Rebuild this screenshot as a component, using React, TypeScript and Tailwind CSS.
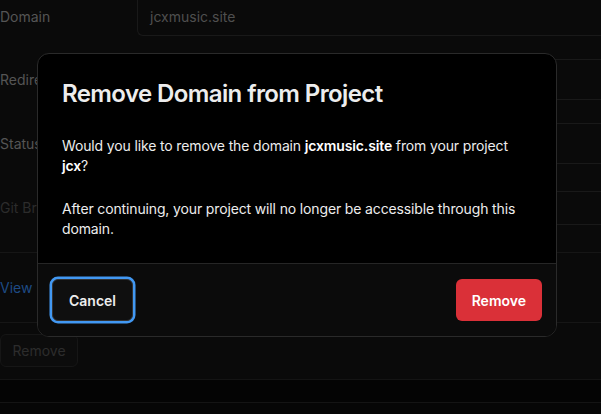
import React from 'react';

const Row: React.FC<{ label: string; dim?: boolean; children: React.ReactNode }> = ({ label, dim, children }) => (
  <div className="flex items-center">
    <div className={`w-[137px] shrink-0 text-[14px] leading-[20px] ${dim ? 'text-[#2c2c2c]' : 'text-[#555]'}`}>{label}</div>
    <div className="flex-1">{children}</div>
  </div>
);

const Field: React.FC<{ short?: boolean }> = ({ short }) => (
  <div className={`${short ? 'h-[34px]' : 'h-[41px]'} border border-[#191919] rounded-l-[6px] border-r-0`} />
);

export default function App() {
  return (
    <div className="relative w-[601px] h-[414px] overflow-hidden bg-[#0a0a0a]" style={{ fontFamily: 'Inter, "Noto Sans", sans-serif' }}>
      {/* dimmed page behind */}
      <div className="-mt-[5px]">
        <div className="flex h-[41px]">
          <div className="w-[137px] shrink-0 text-[14px] text-[#555] pt-[11px]">Domain</div>
          <div className="flex-1 border border-[#191919] border-t-0 border-r-0 rounded-bl-[6px] px-3 pt-[11px] text-[14px] text-[#4f4f4f]">jcxmusic.site</div>
        </div>
        <div className="mt-[23px] flex flex-col gap-[23px]">
          <Row label="Redirect to"><Field /></Row>
          <Row label="Status"><Field /></Row>
        </div>
        <div className="mt-[27px]">
          <Row label="Git Branch" dim><Field short /></Row>
        </div>
        <div className="mt-[27px] border-t border-[#161616] h-[70px] flex items-center text-[14px] text-[#1e4a85]">
          View
        </div>
        <div className="border-t border-[#161616] pt-[11px] pb-[12px]">
          <div className="w-[78px] h-[33px] rounded-[6px] border border-[#161616] bg-[#0c0c0c] flex items-center justify-center text-[14px] text-[#2c2c2c]">
            Remove
          </div>
        </div>
        <div className="border-t border-[#141414] h-[23px] bg-[#040404]" />
        <div className="border-t border-[#141414] h-[20px] bg-[#060606]" />
      </div>

      {/* modal */}
      <div className="absolute left-[37px] top-[53px] w-[520px] rounded-[12px] border border-[#2a2a2a] bg-black overflow-hidden text-[#ededed]">
        <div className="px-6 pt-6 pb-6">
          <h2 className="text-[24px] leading-[32px] font-semibold tracking-[-0.025em] text-[#ededed]">Remove Domain from Project</h2>
          <p className="mt-[26px] text-[14px] leading-[20px] tracking-[-0.01em]">
            Would you like to remove the domain <span className="font-semibold text-white">jcxmusic.site</span> from your project{' '}
            <span className="font-semibold text-white">jcx</span>?
          </p>
          <p className="mt-[23px] text-[14px] leading-[20px] tracking-[-0.01em]">
            After continuing, your project will no longer be accessible through this domain.
          </p>
        </div>
        <div className="border-t border-[#262626] bg-[#0b0b0b] px-[14px] py-[15px] flex items-center justify-between">
          <button className="h-[42px] px-4 rounded-[6px] border border-[#333] bg-[#0f0f0f] ring-[2.5px] ring-[#4298f2] text-[14px] font-semibold text-[#ededed]">
            Cancel
          </button>
          <button className="h-[42px] px-4 rounded-[6px] bg-[#da3038] text-[14px] font-semibold text-white">
            Remove
          </button>
        </div>
      </div>
    </div>
  );
}
